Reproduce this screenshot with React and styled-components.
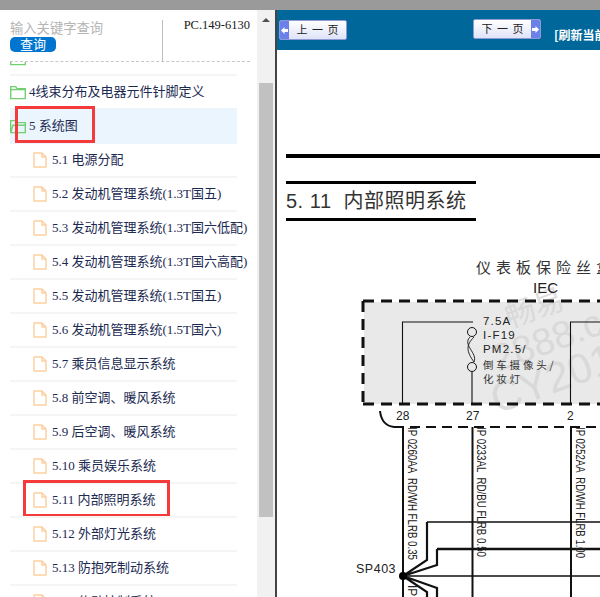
import React from "react";
import styled, { createGlobalStyle } from "styled-components";

const Global = createGlobalStyle`
  html, body { margin: 0; padding: 0; overflow: hidden; background: #fff; }
  #root { height: 597px; }
`;
const cjk = `"Liberation Sans", "Noto Sans CJK SC", sans-serif`;
const rowFont = `"Liberation Serif", "Noto Sans CJK SC", serif`;

const Page = styled.div`
  width: 600px; height: 597px; display: flex; flex-direction: column; overflow: hidden;
  font-family: ${cjk};
`;
const TopBar = styled.div`height: 10px; background: #9a9a9a; flex: none;`;
const Body = styled.div`flex: 1; display: flex; min-height: 0;`;
const Sidebar = styled.aside`
  width: 257px; flex: none; display: flex; flex-direction: column; overflow: hidden; background: #fff;
`;
const SearchBar = styled.div`
  height: 52px; flex: none; display: flex; margin: 0 7px 0 10px; box-sizing: border-box;
  border-bottom: 1px dashed #c8c8c8; position: relative;
`;
const SearchCol = styled.div`
  width: 155px; height: 42px; margin-top: 10px; box-sizing: border-box; border-right: 1px solid #bdbdbd;
  display: flex; flex-direction: column; align-items: flex-start;
`;
const Placeholder = styled.div`color: #b4b4b4; font-size: 13.3px; line-height: 20px; margin-top: -1px;`;
const SearchButton = styled.button`
  width: 46px; height: 15px; padding: 0; border: 0; border-radius: 5px; background: #0075cf; color: #fff;
  font: 13px/15px ${cjk}; margin-top: -2px;
`;
const PartNo = styled.div`
  font: 12.5px/14px "Liberation Serif", serif; color: #1a1a1a; margin: 8px 0 0 21px; white-space: nowrap;
`;
const ListClip = styled.div`flex: 1; overflow: hidden; min-height: 0;`;
const List = styled.div`margin: -22px 0 0 10px; width: 227px;`;
const Row = styled.div`
  height: 32px; border-top: 2px solid ${p => (p.$active ? "#eaf5fd" : "#f5f5f5")};
  background: ${p => (p.$active ? "#eaf5fd" : "transparent")};
  ${p => (p.$active ? "box-shadow: 0 2px 0 #eaf5fd; z-index: 1;" : "")}
  position: relative; display: flex; align-items: center; gap: ${p => (p.$leaf ? "5px" : "3px")};
  padding-left: ${p => (p.$leaf ? "23px" : "0")};
  font: 13px ${rowFont}; color: #1c2a52; white-space: nowrap;
  & > svg { flex: none; }
`;
const RowLabel = styled.span`margin-bottom: 3px;`;
const Callout = styled.div`
  position: absolute; left: ${p => p.$left}px; top: -4px; width: ${p => p.$width}px; height: 37px;
  box-sizing: border-box; border: 3px solid #f6393a; pointer-events: none;
`;
const Scrollbar = styled.div`
  width: 18px; flex: none; background: #f1f1f1; display: flex; flex-direction: column; align-items: center;
`;
const ArrowUp = styled.div`
  margin-top: 8px; width: 0; height: 0; border-left: 4px solid transparent; border-right: 4px solid transparent;
  border-bottom: 4px solid #505050;
`;
const Thumb = styled.div`width: 14px; height: 434px; margin-top: 61px; background: #c1c1c1;`;
const Divider = styled.div`width: 2px; flex: none; background: #444;`;
const Main = styled.main`flex: 1; min-width: 0; display: flex; flex-direction: column; overflow: hidden;`;
const Toolbar = styled.div`
  height: 40px; flex: none; background: #00679b; display: flex; align-items: flex-start; padding-left: 2px; overflow: hidden;
`;
const PageButton = styled.div`
  width: 68px; height: 20px; margin-top: ${p => p.$top}px; margin-left: ${p => p.$left}px; flex: none; box-sizing: border-box;
  display: flex; flex-direction: ${p => (p.$next ? "row-reverse" : "row")};
  border: 1px solid #8d9ad6; border-radius: 2px; background: linear-gradient(#ffffff, #dfe3f8); overflow: hidden;
`;
const ArrowCap = styled.div`
  width: 9px; flex: none; background: #6c80ea; color: #fff; display: flex; align-items: center; justify-content: center;
`;
const ButtonLabel = styled.div`flex: 1; text-align: center; font: 11px/17px "Noto Sans CJK SC", sans-serif; color: #222; word-spacing: 2px;`;
const Refresh = styled.div`
  margin: 17px 0 0 13px; font: bold 12px/16px "Noto Sans CJK SC", sans-serif; color: #fff; white-space: nowrap;
`;
const Doc = styled.div`flex: 1; min-height: 0; position: relative; background: #fff; display: flex; flex-direction: column;`;
const HeavyRule = styled.div`height: 4px; background: #000; margin: 104px 0 0 9px; flex: none;`;
const TitleBlock = styled.div`
  width: 190px; margin: 23px 0 0 9px; height: 40px; box-sizing: border-box; flex: none;
  border-top: 3px solid #000; border-bottom: 3px solid #000;
  font: 20px/34px "Liberation Sans", "Noto Sans CJK SC", sans-serif; color: #333; white-space: pre;
  letter-spacing: 0.5px;
`;
const Schematic = styled.svg`display: block; margin-top: 29px; flex: none;`;

const Folder = ({ open }) => (
  <svg width="16" height="15" viewBox="0 0 16 15" fill="none" stroke="#72cf72" strokeWidth="1.4">
    <path d="M.7 13.6V1.6h5l1.4 2h8.2v10z" />
    {open ? <path d="M.7 13.6 3 6.2h12.3" /> : <path d="M.7 4.6h14.6" />}
  </svg>
);
const FileIcon = () => (
  <svg width="14" height="16" viewBox="0 0 14 16" fill="none" stroke="#fbcf9f" strokeWidth="1.4">
    <path d="M1 1h8l4 4v10H1zM9 1v4h4" strokeLinejoin="round" />
  </svg>
);

const items = [
  ["5.1 电源分配"], ["5.2 发动机管理系统(1.3T国五)"], ["5.3 发动机管理系统(1.3T国六低配)"],
  ["5.4 发动机管理系统(1.3T国六高配)"], ["5.5 发动机管理系统(1.5T国五)"], ["5.6 发动机管理系统(1.5T国六)"],
  ["5.7 乘员信息显示系统"], ["5.8 前空调、暖风系统"], ["5.9 后空调、暖风系统"], ["5.10 乘员娱乐系统"],
  ["5.11 内部照明系统", true], ["5.12 外部灯光系统"], ["5.13 防抱死制动系统"], ["5.14 传动控制系统"],
];

const ink = "#111";
const wireFont = "Liberation Sans, sans-serif";
const Wire = ({ x, y = 427, text, length }) => (
  <text transform={`translate(${x} ${y}) rotate(90)`} fontFamily={wireFont} fontSize="12" fill="#222" xmlSpace="preserve"
    textLength={length} lengthAdjust="spacingAndGlyphs">{text}</text>
);
const Mark = ({ x, y, size = 38, children }) => (
  <text transform={`translate(${x} ${y}) rotate(-20)`} fontSize={size}>{children}</text>
);
const Diagram = () => (
  <Schematic width="323" height="347" viewBox="277 250 323 347">
    <rect x="364" y="302" width="240" height="102" fill="#e9e9e9" />
    <g fontFamily="Liberation Sans, Noto Sans CJK SC, sans-serif" fill="#d4d4d4" opacity=".75">
      <Mark x={510} y={328} size={30}>畅易</Mark>
      <Mark x={498} y={372}>2888.com</Mark>
      <Mark x={497} y={414} size={42}>CY2016</Mark>
    </g>
    <path d="M363 301h240M363 301v103M363 404h240" fill="none" stroke={ink} strokeWidth="3" strokeDasharray="11 7" />
    <path d="M402.5 404V322H473M570.5 404V322H600" fill="none" stroke={ink} strokeWidth="1.1" />
    <path d="M472 372v32" stroke={ink} strokeWidth="1.1" />
    <circle cx="472" cy="332" r="4.5" fill="#e9e9e9" stroke={ink} />
    <circle cx="472" cy="367" r="4.5" fill="#e9e9e9" stroke={ink} />
    <path d="M470 337c-8 8 8 16 4 25M474 337c-8 8-8 14 0 25" fill="none" stroke={ink} strokeWidth=".9" />
    <g fontFamily="Liberation Sans, sans-serif" fontSize="11.5" fill="#222" letterSpacing="1.2">
      <text x="483" y="325">7.5A</text>
      <text x="483" y="339">I-F19</text>
      <text x="483" y="353">PM2.5/</text>
    </g>
    <g fontFamily="Noto Sans CJK SC, sans-serif" fontSize="10.5" fill="#333" letterSpacing="2.8">
      <text x="483" y="369">倒车摄像头/</text>
      <text x="483" y="383">化妆灯</text>
    </g>
    <text x="476" y="273" fontFamily="Noto Sans CJK SC, sans-serif" fontSize="15" letterSpacing="5" fill="#333">仪表板保险丝盒</text>
    <text x="533" y="293" fontFamily="Liberation Sans, sans-serif" fontSize="15" fill="#222">IEC</text>
    <g fontFamily="Liberation Sans, sans-serif" fontSize="12" fill="#222">
      <text x="396" y="420">28</text>
      <text x="466" y="420">27</text>
      <text x="567" y="420">2</text>
      <text x="356" y="573" fontSize="12.5" letterSpacing=".5">SP403</text>
    </g>
    <path d="M380 411c1 9 6 15 14 16" fill="none" stroke={ink} strokeWidth="2" />
    <path d="M394 427h210" stroke={ink} strokeWidth="2" strokeDasharray="10 6" />
    <path d="M403 427v170M472.5 427v170M571 427v170" stroke={ink} strokeWidth="2" fill="none" />
    <path d="M403 576H600M427 522H600" stroke={ink} strokeWidth="1.6" fill="none" />
    <path d="M437 549H600" stroke={ink} strokeWidth="2.6" fill="none" />
    <path d="M403 576 427 560V522M403 576 437 565V549M403 576 437 588V597M403 576 427 592V597" stroke={ink} strokeWidth="2.2" fill="none" />
    <circle cx="403" cy="576" r="4" fill="#000" />
    <Wire x={408} text="IP 0260AA  RD/WH FLRB 0.35" length={133} />
    <Wire x={477} text="IP 0233AL  RD/BU FLRB 0.50" length={130} />
    <Wire x={576} text="IP 0252AA  RD/WH FLRB 1.00" length={131} />
    <Wire x={408} y={585} text="IP" />
  </Schematic>
);

export default function App() {
  return (
    <Page>
      <Global />
      <TopBar />
      <Body>
        <Sidebar>
          <SearchBar>
            <SearchCol>
              <Placeholder>输入关键字查询</Placeholder>
              <SearchButton>查询</SearchButton>
            </SearchCol>
            <PartNo>PC.149-6130</PartNo>
          </SearchBar>
          <ListClip>
            <List>
              <Row><Folder /></Row>
              <Row><Folder /><RowLabel>4线束分布及电器元件针脚定义</RowLabel></Row>
              <Row $active><Folder open /><RowLabel>5 系统图</RowLabel><Callout $left={5} $width={80} /></Row>
              {items.map(([label, marked]) => (
                <Row $leaf key={label}>
                  <FileIcon /><RowLabel>{label}</RowLabel>
                  {marked && <Callout $left={13} $width={147} />}
                </Row>
              ))}
            </List>
          </ListClip>
        </Sidebar>
        <Scrollbar><ArrowUp /><Thumb /></Scrollbar>
        <Divider />
        <Main>
          <Toolbar>
            <PageButton $top={10} $left={0}>
              <ArrowCap><svg width="7" height="7" viewBox="0 0 7 7"><path d="M0 3.5 3.5 0v2H7v3H3.5v2z" fill="#fff" /></svg></ArrowCap>
              <ButtonLabel>上 一 页</ButtonLabel>
            </PageButton>
            <PageButton $top={9} $left={126} $next>
              <ArrowCap><svg width="7" height="7" viewBox="0 0 7 7"><path d="M7 3.5 3.5 0v2H0v3h3.5v2z" fill="#fff" /></svg></ArrowCap>
              <ButtonLabel>下 一 页</ButtonLabel>
            </PageButton>
            <Refresh>[刷新当前页]</Refresh>
          </Toolbar>
          <Doc>
            <HeavyRule />
            <TitleBlock>5. 11  内部照明系统</TitleBlock>
            <Diagram />
          </Doc>
        </Main>
      </Body>
    </Page>
  );
}
